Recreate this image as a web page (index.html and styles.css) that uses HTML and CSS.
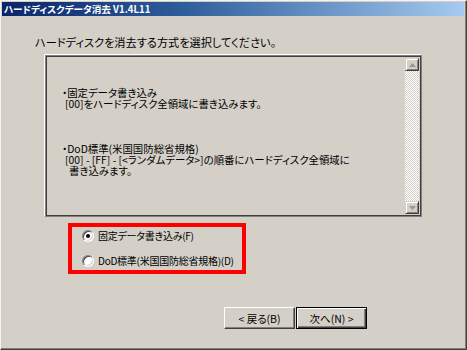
FILE: index.html
```html
<!DOCTYPE html>
<html lang="ja">
<head>
<meta charset="utf-8">
<title>ハードディスクデータ消去</title>
<link rel="stylesheet" href="styles.css">
</head>
<body>
<div class="window">
  <div class="titlebar"><span class="title">ハードディスクデータ消去 V1.4L11</span></div>
  <div class="content">
    <p class="instruction">ハードディスクを消去する方式を選択してください。</p>
    <div class="textbox">
      <div class="textarea">
        <p class="item">
          <span class="line">・固定データ書き込み</span>
          <span class="line sub">[00]をハードディスク全領域に書き込みます。</span>
        </p>
        <p class="item second">
          <span class="line">・DoD標準(米国国防総省規格)</span>
          <span class="line sub">[00] - [FF] - [&lt;ランダムデータ&gt;]の順番にハードディスク全領域に</span>
          <span class="line sub2">書き込みます。</span>
        </p>
      </div>
      <div class="scrollbar">
        <div class="sbtn"><svg width="7" height="4" viewBox="0 0 7 4"><path d="M3.5 0 L7 4 L0 4 Z" fill="#9a978f"/></svg></div>
        <div class="track"></div>
        <div class="sbtn"><svg width="7" height="4" viewBox="0 0 7 4"><path d="M0 0 L7 0 L3.5 4 Z" fill="#9a978f"/></svg></div>
      </div>
    </div>
    <div class="options">
      <label class="radio"><span class="dot checked"></span><span class="label">固定データ書き込み(F)</span></label>
      <label class="radio"><span class="dot"></span><span class="label">DoD標準(米国国防総省規格)(D)</span></label>
    </div>
    <div class="buttons">
      <button class="btn">&lt; 戻る(B)</button>
      <button class="btn default">次へ(N) &gt;</button>
    </div>
  </div>
</div>
</body>
</html>
```

FILE: styles.css
```css
* { box-sizing: border-box; }
html, body { margin: 0; padding: 0; }
body {
  width: 467px;
  height: 350px;
  overflow: hidden;
  background: #d4d0c8;
  font-family: "Noto Sans CJK JP", "Noto Sans", sans-serif;
  font-feature-settings: "palt";
  color: #000;
}
.window {
  width: 467px;
  height: 350px;
  background: #d4d0c8;
  border-top: 1px solid #f4f3ef;
  border-left: 1px solid #f4f3ef;
  border-right: 1px solid #404040;
  border-bottom: 1px solid #404040;
  box-shadow: inset -1px -1px 0 #808080;
  padding: 1px 2px 2px 1px;
  display: flex;
  flex-direction: column;
}
.titlebar {
  height: 14px;
  background: linear-gradient(to right, #0a246a 0%, #2f5f9c 40%, #a6caf0 100%);
  display: flex;
  align-items: center;
  padding-left: 2px;
}
.title {
  color: #fff;
  font-weight: bold;
  font-size: 9.6px;
  line-height: 14px;
  white-space: nowrap;
}
.content {
  flex: 1;
  display: flex;
  flex-direction: column;
  padding-left: 33px;
}
.instruction {
  margin: 20px 0 0 0;
  font-size: 11.2px;
  line-height: 12px;
  white-space: nowrap;
}
.textbox {
  margin: 7px 0 0 10px;
  width: 377px;
  height: 162px;
  border: 1px solid #808080;
  box-shadow: inset 0 0 0 1px #404040, -1px -1px 0 #ffffff;
  padding: 2px;
  display: flex;
}
.textarea {
  flex: 1;
  padding: 29px 0 0 14px;
  font-size: 10.4px;
  line-height: 11px;
}
.item { margin: 0; }
.item.second { margin-top: 34px; }
.line { display: block; white-space: nowrap; }
.line.sub { padding-left: 3px; }
.line.sub2 { padding-left: 7px; }
.scrollbar {
  width: 14px;
  display: flex;
  flex-direction: column;
}
.sbtn {
  height: 13px;
  background: #d4d0c8;
  border-top: 1px solid #d4d0c8;
  border-left: 1px solid #d4d0c8;
  border-right: 1px solid #404040;
  border-bottom: 1px solid #404040;
  box-shadow: inset 1px 1px 0 #ffffff, inset -1px -1px 0 #808080;
  display: flex;
  align-items: center;
  justify-content: center;
}
.track {
  flex: 1;
  background-color: #eeede9;
  background-image: repeating-conic-gradient(#ffffff 0 25%, #d4d0c8 0 50%);
  background-size: 2px 2px;
}
.options {
  margin: 6px 0 0 33px;
  width: 178px;
  height: 51px;
  border: 4px solid #ff0000;
  padding: 3px 0 0 10px;
  display: flex;
  flex-direction: column;
  gap: 13px;
}
.radio {
  display: flex;
  align-items: center;
  height: 12px;
  font-size: 10px;
  letter-spacing: -0.25px;
  white-space: nowrap;
}
.dot {
  width: 12px;
  height: 12px;
  border-radius: 50%;
  background: #ffffff;
  border: 1px solid #808080;
  border-right-color: #ffffff;
  border-bottom-color: #ffffff;
  box-shadow: inset 1px 1px 0 #404040, inset -1px -1px 0 #d4d0c8;
  margin-right: 4px;
  flex: none;
  display: flex;
  align-items: center;
  justify-content: center;
}
.dot.checked::after {
  content: "";
  width: 4px;
  height: 4px;
  border-radius: 50%;
  background: #000;
}
.label { line-height: 12px; }
.buttons {
  margin: 33px 0 0 189px;
  display: flex;
  gap: 1px;
}
.btn {
  width: 71px;
  height: 22px;
  padding: 0;
  margin: 0;
  font-family: inherit;
  font-feature-settings: "palt";
  font-size: 10.5px;
  color: #000;
  background: #d4d0c8;
  border-top: 1px solid #ffffff;
  border-left: 1px solid #ffffff;
  border-right: 1px solid #404040;
  border-bottom: 1px solid #404040;
  box-shadow: inset -1px -1px 0 #808080;
}
.btn.default {
  border: 1px solid #000000;
  box-shadow: inset 1px 1px 0 #ffffff, inset -1px -1px 0 #404040, inset -2px -2px 0 #808080;
}
```
